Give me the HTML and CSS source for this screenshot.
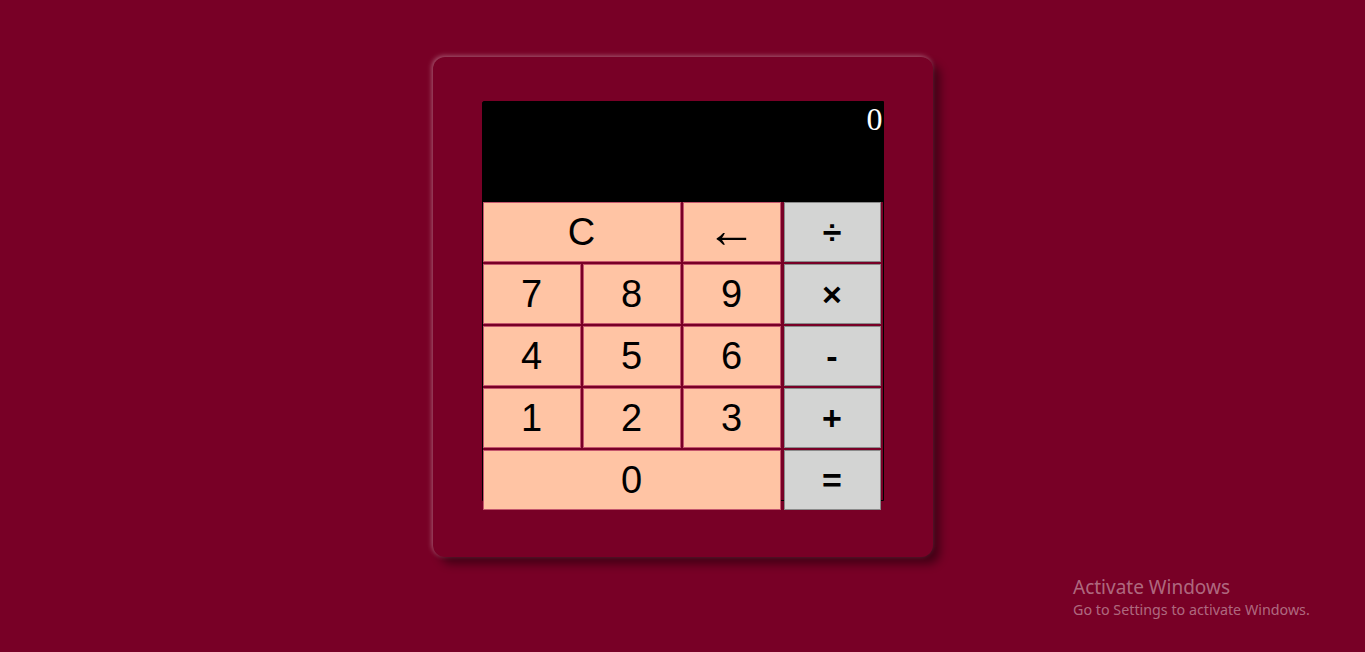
FILE: index.html
```html
<!DOCTYPE html>
<html lang="en">
<head>
<meta charset="utf-8">
<title>Calculator</title>
<link rel="stylesheet" href="styles.css">
</head>
<body>
<div class="page">
  <div class="card">
    <div class="calc">
      <div class="display">0</div>
      <div class="keys">
        <button class="key span2">C</button>
        <button class="key"><span class="arrow">←</span></button>
        <button class="key op">÷</button>
        <button class="key">7</button>
        <button class="key">8</button>
        <button class="key">9</button>
        <button class="key op">×</button>
        <button class="key">4</button>
        <button class="key">5</button>
        <button class="key">6</button>
        <button class="key op">-</button>
        <button class="key">1</button>
        <button class="key">2</button>
        <button class="key">3</button>
        <button class="key op">+</button>
        <button class="key span3">0</button>
        <button class="key op">=</button>
      </div>
    </div>
  </div>
</div>
<div class="activate">
  <div class="act-title">Activate Windows</div>
  <div class="act-sub">Go to Settings to activate Windows.</div>
</div>
</body>
</html>
```

FILE: styles.css
```css
html, body {
  margin: 0;
  padding: 0;
  background: #780026;
  height: 100%;
  overflow: hidden;
}

.page {
  display: flex;
  justify-content: center;
  padding-top: 57px;
}

.card {
  width: 500px;
  height: 500px;
  box-sizing: border-box;
  background: #780026;
  border-radius: 12px;
  padding: 44px 0 0 49px;
  box-shadow: 7px 7px 10px rgba(0, 0, 0, 0.45), -1px -1px 5px rgba(255, 255, 255, 0.38);
}

.calc {
  width: 400px;
  height: 398px;
  border: 1px solid #000;
  border-top-left-radius: 2px;
}

.display {
  height: 100px;
  background: #000;
  color: #fff;
  font-family: "Liberation Serif", "Times New Roman", serif;
  font-size: 32px;
  line-height: 34px;
  text-align: right;
  padding-top: 0;
  box-sizing: border-box;
}

.keys {
  display: grid;
  grid-template-columns: 98px 98px 98px 98px;
  grid-auto-rows: 60px;
  column-gap: 2px;
  row-gap: 2px;
}

.key {
  margin: 0;
  padding: 0;
  box-sizing: border-box;
  background: #ffc4a4;
  border: 1px solid #c4566c;
  font-family: "Liberation Sans", Arial, sans-serif;
  font-size: 38px;
  color: #000;
  display: flex;
  align-items: center;
  justify-content: center;
  line-height: 1;
}

.span2 { grid-column: span 2; }
.span3 { grid-column: span 3; }

.arrow {
  font-family: "Liberation Serif", "DejaVu Serif", serif;
  font-size: 50px;
  margin-top: -4px;
}

.op {
  background: #d3d4d3;
  border: 1px solid #8a8a8a;
  font-size: 34px;
  font-weight: bold;
  margin-left: 1px;
  width: 97px;
}

.activate {
  position: absolute;
  left: 1073px;
  top: 576px;
  color: rgba(255, 255, 255, 0.42);
  font-family: "Noto Sans", "Open Sans", sans-serif;
}

.act-title {
  font-size: 19px;
  line-height: 23px;
}

.act-sub {
  font-size: 14.3px;
  line-height: 20px;
  margin-top: 1px;
}
```
